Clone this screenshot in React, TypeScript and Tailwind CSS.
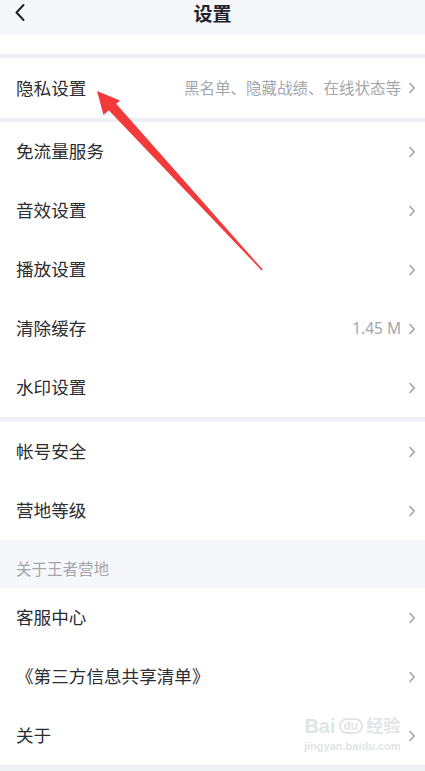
import { ReactNode } from 'react';

const font = { fontFamily: '"Noto Sans CJK SC", "Noto Sans", sans-serif' };

function Chevron() {
  return (
    <svg width="8" height="12" viewBox="0 0 8 12" className="shrink-0">
      <path d="M2 1.5l4.2 4.5L2 10.5" fill="none" stroke="#9b9ea3" strokeWidth="1.4" strokeLinecap="round" strokeLinejoin="round" />
    </svg>
  );
}

function Row({ label, extra, tall }: { label: string; extra?: ReactNode; tall?: boolean }) {
  return (
    <div className={`flex items-center justify-between bg-white pl-4 pr-[9px] ${tall ? 'h-[60px]' : 'h-[59px]'}`}>
      <span className="text-[17.6px] text-[#2b2d31]">{label}</span>
      <div className="flex items-center gap-[7px]">
        {extra && <span className="text-[15.5px] text-[#a3a6ab]">{extra}</span>}
        <Chevron />
      </div>
    </div>
  );
}

export default function App() {
  return (
    <div className="relative h-[771px] w-[425px] overflow-hidden bg-[#eef0f4]" style={font}>
      {/* 顶部导航 */}
      <div className="relative flex h-[35px] items-start justify-center bg-[#f6f7fb]">
        <svg width="12" height="20" viewBox="0 0 12 20" className="absolute left-[14px] top-[3px]">
          <path d="M9.5 2L2.5 9.5l7 7.5" fill="none" stroke="#1f2328" strokeWidth="2" strokeLinecap="round" strokeLinejoin="round" />
        </svg>
        <span className="text-[19px] font-bold leading-[26px] text-[#1f2328]">设置</span>
      </div>
      <div className="h-[19px] bg-white" />

      <div className="mt-[4px]">
        <Row label="隐私设置" extra="黑名单、隐藏战绩、在线状态等" tall />
      </div>

      <div className="mt-[4px]">
        <Row label="免流量服务" />
        <Row label="音效设置" />
        <Row label="播放设置" />
        <Row label="清除缓存" extra={<span style={{ fontFamily: '"Noto Sans", sans-serif' }}>1.45 M</span>} />
        <Row label="水印设置" />
      </div>

      <div className="mt-[5px]">
        <Row label="帐号安全" />
        <Row label="营地等级" />
      </div>

      <div className="flex h-[48px] items-center bg-[#f6f7fa] pl-4 pt-[9px] text-[15.5px] text-[#a3a6ab]">关于王者营地</div>

      <div>
        <Row label="客服中心" />
        <Row label="《第三方信息共享清单》" />
        <Row label="关于" />
      </div>

      {/* 水印 */}
      <div className="pointer-events-none absolute left-[304px] top-[716px] flex flex-col items-center leading-none text-[#e2e4e7]">
        <div className="flex items-center gap-[3px] text-[20px] font-bold" style={{ fontFamily: '"Liberation Sans", "Noto Sans CJK SC", sans-serif' }}>
          <span>Bai</span>
          <span className="rounded-full border-2 border-[#e2e4e7] px-[3px] text-[12px]">du</span>
          <span className="text-[17px]">经验</span>
        </div>
        <span className="mt-[5px] text-[11px] font-bold" style={{ fontFamily: '"Liberation Sans", sans-serif' }}>jingyan.baidu.com</span>
      </div>

      {/* 红色箭头标注 */}
      <svg className="pointer-events-none absolute left-0 top-0" width="425" height="771" viewBox="0 0 425 771">
        <polygon points="97,91 103.5,115 120,100.5" fill="#f23a3a" />
        <polygon points="107.5,109 115,102.5 262.8,269.6 261.6,270.4" fill="#f23a3a" />
      </svg>
    </div>
  );
}
